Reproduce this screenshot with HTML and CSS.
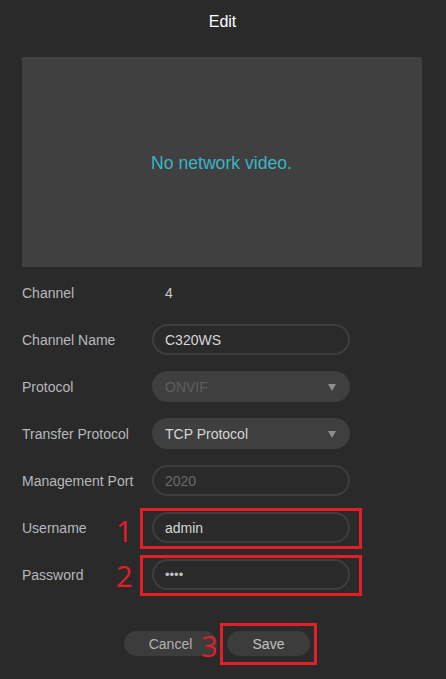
FILE: index.html
```html
<!DOCTYPE html>
<html>
<head>
<meta charset="utf-8">
<link rel="stylesheet" href="styles.css">
</head>
<body>
<div class="dialog">
  <div class="title">Edit</div>
  <div class="video"><span class="novideo">No network video.</span></div>
  <div class="form">
    <div class="label">Channel</div>
    <div class="value">4</div>

    <div class="label">Channel Name</div>
    <div class="field"><div class="input">C320WS</div></div>

    <div class="label">Protocol</div>
    <div class="field"><div class="select disabled">ONVIF<span class="arrow"></span></div></div>

    <div class="label">Transfer Protocol</div>
    <div class="field"><div class="select">TCP Protocol<span class="arrow"></span></div></div>

    <div class="label">Management Port</div>
    <div class="field"><div class="input muted">2020</div></div>

    <div class="label">Username</div>
    <div class="field"><div class="input">admin</div><span class="mark num1">1</span><span class="redbox box-field"></span></div>

    <div class="label">Password</div>
    <div class="field"><div class="input pass">••••</div><span class="mark num2">2</span><span class="redbox box-field"></span></div>
  </div>
  <div class="buttons">
    <div class="btn cancel">Cancel</div>
    <div class="btnwrap"><div class="btn save">Save</div><span class="mark num3">3</span><span class="redbox box-btn"></span></div>
  </div>
</div>
</body>
</html>
```
FILE: styles.css
```css
html, body {
  margin: 0;
  padding: 0;
  background: #2a2a2a;
  font-family: "Liberation Sans", Arial, sans-serif;
}
.dialog {
  width: 446px;
  height: 679px;
  display: flex;
  flex-direction: column;
  align-items: flex-start;
}
.title {
  align-self: center;
  color: #ffffff;
  font-size: 16px;
  height: 18px;
  line-height: 18px;
  margin-top: 13px;
  margin-left: -1px;
}
.video {
  margin-top: 26px;
  margin-left: 22px;
  width: 400px;
  height: 210px;
  background: #404040;
  display: flex;
  align-items: center;
  justify-content: center;
}
.novideo {
  color: #3bb5c5;
  font-size: 17.6px;
  margin-top: 2px;
  margin-left: -1px;
}
.form {
  margin-top: 10px;
  margin-left: 22px;
  display: grid;
  grid-template-columns: 130px 198px;
  grid-auto-rows: 31px;
  row-gap: 16px;
}
.label {
  color: #b6b9bd;
  font-size: 14px;
  display: flex;
  align-items: center;
}
.value {
  color: #c8c8c8;
  font-size: 14px;
  padding-left: 13px;
  display: flex;
  align-items: center;
}
.field {
  position: relative;
}
.input, .select {
  box-sizing: border-box;
  height: 31px;
  border-radius: 16px;
  font-size: 14px;
  display: flex;
  align-items: center;
  padding-left: 11px;
  color: #d6d6d6;
}
.input {
  border: 2px solid #3e3e3e;
}
.input.muted {
  color: #6a6a6a;
}
.input.pass {
  font-size: 13px;
  color: #c0c0c0;
}
.select {
  background: #3f3f3f;
  padding-left: 13px;
  position: relative;
}
.select.disabled {
  color: #5e5e5e;
}
.arrow {
  position: absolute;
  right: 14px;
  top: 13px;
  width: 0;
  height: 0;
  border-left: 4.5px solid transparent;
  border-right: 4.5px solid transparent;
  border-top: 7px solid #8e8e8e;
}
.buttons {
  margin-top: 41px;
  margin-left: 124px;
  display: flex;
  gap: 10px;
}
.btn {
  height: 25px;
  border-radius: 13px;
  background: #3c3c3c;
  color: #b2b2b2;
  font-size: 14px;
  display: flex;
  align-items: center;
  justify-content: center;
}
.cancel {
  width: 93px;
}
.btnwrap {
  position: relative;
}
.save {
  width: 83px;
  color: #c2c2c2;
}
.redbox {
  position: absolute;
  border: 3px solid #e41e26;
  pointer-events: none;
}
.box-field {
  left: -12px;
  right: -12px;
  top: -4px;
  bottom: -6px;
}
.box-btn {
  left: -7px;
  right: -7px;
  top: -8px;
  bottom: -9px;
}
.mark {
  position: absolute;
  color: #e41e26;
  font-family: "Open Sans", "DejaVu Sans", sans-serif;
  font-weight: 400;
  font-size: 29px;
  line-height: 1;
}
.num1 {
  left: -36px;
  top: 4px;
}
.num2 {
  left: -36px;
  top: 2px;
}
.num3 {
  left: -26px;
  top: 0px;
}
```
